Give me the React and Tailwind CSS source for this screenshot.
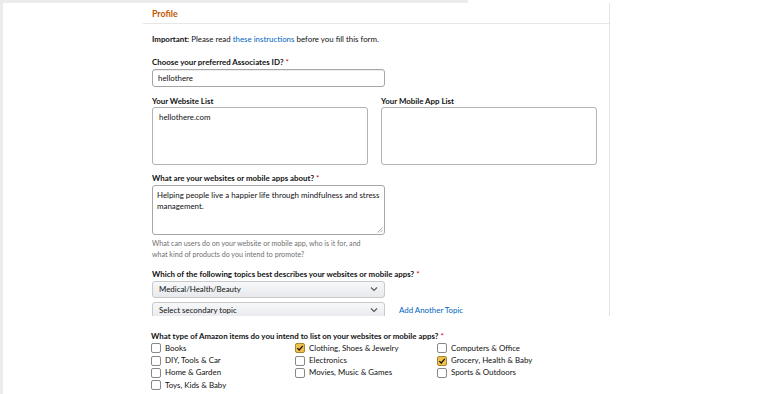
import { memo } from 'react';

const categories = [
  { label: 'Books', checked: false },
  { label: 'Clothing, Shoes & Jewelry', checked: true },
  { label: 'Computers & Office', checked: false },
  { label: 'DIY, Tools & Car', checked: false },
  { label: 'Electronics', checked: false },
  { label: 'Grocery, Health & Baby', checked: true },
  { label: 'Home & Garden', checked: false },
  { label: 'Movies, Music & Games', checked: false },
  { label: 'Sports & Outdoors', checked: false },
  { label: 'Toys, Kids & Baby', checked: false },
];

function Req() {
  return <span className="text-[#c40000] font-normal"> *</span>;
}

function Chevron() {
  return (
    <svg width="8" height="6" viewBox="0 0 8 6" className="text-[#555]">
      <path d="M1 1.5 L4 4.5 L7 1.5" fill="none" stroke="currentColor" strokeWidth="1.1" />
    </svg>
  );
}

function Select({ label }) {
  return (
    <div className="w-[233px] h-[17px] shrink-0 flex items-center justify-between px-[6px] rounded-[3px] border border-[#c8c8c8] bg-gradient-to-b from-[#f7f8fa] to-[#e7e9ec] text-[#111]">
      <span>{label}</span>
      <Chevron />
    </div>
  );
}

function Checkbox({ label, checked }) {
  return (
    <label className="flex items-center gap-[4px] h-[12.4px]">
      <span
        className={`w-[10px] h-[10px] rounded-[2px] border flex items-center justify-center ${
          checked ? 'bg-[#f0c14b] border-[#a88734]' : 'bg-white border-[#888]'
        }`}
      >
        {checked && (
          <svg width="8" height="8" viewBox="0 0 8 8">
            <path d="M1.3 4.1 L3.2 6 L6.8 1.8" fill="none" stroke="#111" strokeWidth="1.2" />
          </svg>
        )}
      </span>
      <span className="text-[#111]">{label}</span>
    </label>
  );
}

function App() {
  return (
    <div className="min-h-screen flex bg-white text-[7.9px] leading-[11px] text-[#111]" style={{ fontFamily: 'Lato, "Open Sans", sans-serif' }}>
      <div className="w-[3px] bg-[#ececec] shrink-0" />
      <div className="flex-1">
        <div className="h-[3px] w-[465px] bg-[#ececec]" />
        <div className="ml-[140px] w-[467px] h-[313px] overflow-hidden border-r border-[#e3e3e3]">
          <div className="h-[21px] flex items-center px-[9px] border-b border-[#e7e7e7]">
            <span className="font-bold text-[#c45500] text-[8.8px]">Profile</span>
          </div>
          <div className="pl-[9px] pt-[9.5px]">
            <p>
              <span className="font-bold">Important:</span> Please read{' '}
              <span className="text-[#0066c0]">these instructions</span> before you fill this form.
            </p>

            <div className="mt-[12px] font-bold">
              Choose your preferred Associates ID?<Req />
            </div>
            <div className="mt-[1.5px] w-[233px] h-[18px] flex items-center px-[5px] border border-[#a6a6a6] rounded-[3px] shadow-[0_1px_0_rgba(0,0,0,0.07)_inset]">
              hellothere
            </div>

            <div className="mt-[8.5px] flex gap-[13px]">
              <div className="w-[216px]">
                <div className="font-bold">Your Website List</div>
                <div className="h-[58px] border border-[#b3b3b3] rounded-[3px] px-[6px] pt-[4px]">hellothere.com</div>
              </div>
              <div className="w-[216px]">
                <div className="font-bold">Your Mobile App List</div>
                <div className="h-[58px] border border-[#b3b3b3] rounded-[3px]" />
              </div>
            </div>

            <div className="mt-[8.5px] font-bold">
              What are your websites or mobile apps about?<Req />
            </div>
            <div className="mt-[0.5px] relative w-[233px] h-[50px] border border-[#a6a6a6] rounded-[3px] px-[4px] pt-[4.5px]">
              Helping people live a happier life through mindfulness and stress management.
              <svg className="absolute right-[1px] bottom-[1px]" width="6" height="6" viewBox="0 0 6 6">
                <path d="M5.5 0.5 L0.5 5.5 M5.5 3 L3 5.5" stroke="#999" strokeWidth="0.8" />
              </svg>
            </div>
            <p className="mt-[3.5px] text-[#6f6f6f] text-[7.1px] w-[215px]">
              What can users do on your website or mobile app, who is it for, and what kind of products do you intend to promote?
            </p>

            <div className="mt-[9px] font-bold">
              Which of the following topics best describes your websites or mobile apps?<Req />
            </div>
            <div className="mt-[0.5px]">
              <Select label="Medical/Health/Beauty" />
            </div>
            <div className="mt-[4px] flex items-center gap-[14px]">
              <Select label="Select secondary topic" />
              <span className="text-[#0066c0]">Add Another Topic</span>
            </div>
          </div>
        </div>

        <div className="ml-[148px] mt-[15px]">
          <div className="font-bold">
            What type of Amazon items do you intend to list on your websites or mobile apps?<Req />
          </div>
          <div className="grid grid-cols-[144px_142px_auto]">
            {categories.map((c) => (
              <Checkbox key={c.label} label={c.label} checked={c.checked} />
            ))}
          </div>
        </div>
      </div>
    </div>
  );
}

export default memo(App);
